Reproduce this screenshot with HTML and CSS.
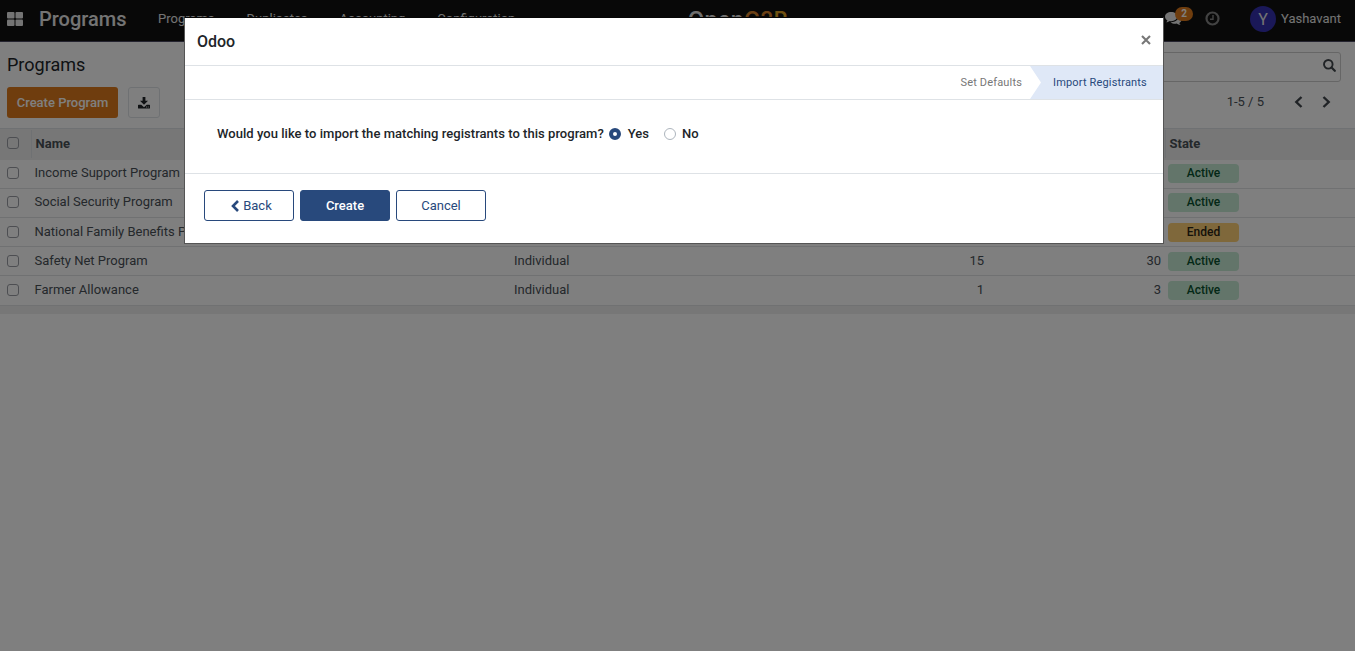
FILE: index.html
```html
<!DOCTYPE html>
<html lang="en">
<head>
<meta charset="utf-8">
<title>Programs</title>
<link rel="stylesheet" href="styles.css">
</head>
<body>
<header class="navbar">
  <svg class="apps" width="16" height="14" viewBox="0 0 16 14"><g fill="#e8e8e8"><rect width="7.5" height="6.5" rx="1"/><rect x="8.5" width="7.5" height="6.5" rx="1"/><rect y="7.5" width="7.5" height="6.5" rx="1"/><rect x="8.5" y="7.5" width="7.5" height="6.5" rx="1"/></g></svg>
  <span class="brand">Programs</span>
  <nav class="menu"><span>Programs</span><span>Duplicates</span><span>Accounting</span><span>Configuration</span></nav>
  <div class="logo">Open<b>G2</b><i>P</i></div>
  <div class="tray">
    <div class="chat">
      <svg width="17" height="14" viewBox="0 0 17 14"><g fill="#e8e8e8"><path d="M6.2 0C2.8 0 0 2.1 0 4.7c0 1.5.9 2.8 2.4 3.7-.2.8-.7 1.300-1.200 1.900 1.500-.1 2.600-.6 3.500-1.300.5.1 1 .2 1.500.2 3.400 0 6.200-2.100 6.200-4.600S9.600 0 6.200 0z"/><path d="M13.400 3.300c.1.400.2.900.2 1.300 0 3.300-3.400 5.700-7.400 5.700h-.6c1.100 1 2.800 1.500 4.600 1.500.5 0 1-.1 1.500-.2 1 .8 2.300 1.400 3.900 1.500-.7-.6-1.100-1.200-1.300-2 1.400-.8 2.300-2 2.300-3.500 0-1.800-1.200-3.400-3.200-4.300z"/></g></svg>
      <span class="count">2</span>
    </div>
    <svg class="clock" width="15" height="15" viewBox="0 0 15 15" fill="none" stroke="#858585"><circle cx="7.500" cy="7.500" r="6" stroke-width="2.200"/><path d="M8 4v4.200H5" stroke-width="1.400"/></svg>
    <span class="avatar">Y</span>
    <span class="user">Yashavant</span>
  </div>
</header>

<section class="panel">
  <div class="panel-left">
    <h1>Programs</h1>
    <div class="actions">
      <button class="create">Create Program</button>
      <button class="export"><svg width="12" height="12" viewBox="0 0 12 12" fill="#212529"><path d="M4.600 0h2.800v3.800H10L6 7.800 2 3.800h2.600z"/><path fill-rule="evenodd" d="M.6 7.700h2.700L6 10.200l2.700-2.500h2.700q.6 0 .6.600v2.600q0 .6-.6.600H.6q-.6 0-.6-.6V8.300q0-.6.600-.6zM8 9.600v.8h.8v-.8zm1.800 0v.8h.8v-.8z"/></svg></button>
    </div>
  </div>
  <div class="panel-right">
    <div class="search"><svg width="13" height="13" viewBox="0 0 13 13" fill="none" stroke="#40464c"><circle cx="5.300" cy="5.300" r="4.300" stroke-width="1.900"/><path d="M8.500 8.500l3.300 3.300" stroke-width="2.200" stroke-linecap="round"/></svg></div>
    <div class="pager">
      <span>1-5 / 5</span>
      <svg width="9" height="12" viewBox="0 0 9 12" fill="none" stroke="#40464c" stroke-width="2.400"><path d="M7.500 1L2.300 6l5.200 5"/></svg>
      <svg width="9" height="12" viewBox="0 0 9 12" fill="none" stroke="#40464c" stroke-width="2.400"><path d="M1.500 1l5.200 5-5.200 5"/></svg>
    </div>
  </div>
</section>

<main class="list">
  <div class="row head"><span class="sel"><i class="box"></i></span><span>Name</span><span></span><span></span><span></span><span class="state">State</span></div>
  <div class="row"><span class="sel"><i class="box"></i></span><span>Income Support Program</span><span></span><span></span><span></span><span class="badge">Active</span></div>
  <div class="row"><span class="sel"><i class="box"></i></span><span>Social Security Program</span><span></span><span></span><span></span><span class="badge">Active</span></div>
  <div class="row"><span class="sel"><i class="box"></i></span><span>National Family Benefits Program</span><span></span><span></span><span></span><span class="badge ended">Ended</span></div>
  <div class="row"><span class="sel"><i class="box"></i></span><span>Safety Net Program</span><span>Individual</span><span class="num">15</span><span class="num">30</span><span class="badge">Active</span></div>
  <div class="row"><span class="sel"><i class="box"></i></span><span>Farmer Allowance</span><span>Individual</span><span class="num">1</span><span class="num">3</span><span class="badge">Active</span></div>
  <div class="foot"></div>
</main>

<div class="backdrop">
  <div class="modal">
    <div class="modal-head"><span>Odoo</span><svg width="10" height="10" viewBox="0 0 10 10" stroke="#777" stroke-width="2.100"><path d="M1 1l8 8M9 1L1 9"/></svg></div>
    <div class="steps"><span class="step">Set Defaults</span><span class="step current">Import Registrants</span></div>
    <div class="question">
      <span class="ask">Would you like to import the matching registrants to this program?</span>
      <i class="radio on"></i><span class="yes">Yes</span>
      <i class="radio"></i><span>No</span>
    </div>
    <div class="buttons">
      <button class="btn back"><svg width="8" height="12" viewBox="0 0 8 12" fill="none" stroke="#28497c" stroke-width="2.600"><path d="M7 1L2 6l5 5"/></svg>Back</button>
      <button class="btn primary">Create</button>
      <button class="btn">Cancel</button>
    </div>
  </div>
</div>
</body>
</html>
```
FILE: styles.css
```css
* { box-sizing: border-box; }
body { margin: 0; height: 651px; overflow: hidden; background: #fff; color: #495057; font: 13px/20px Roboto, sans-serif; }
button { font: inherit; padding: 0; display: flex; align-items: center; justify-content: center; }
svg { display: block; flex: none; }

.navbar { position: relative; display: flex; align-items: center; height: 42px; padding: 0 14px 4px 7px; background: #111; border-bottom: 1px solid #4a4860; color: #e8e8e8; }
.brand { margin-left: 16px; font-size: 20px; font-weight: 500; width: 119px; }
.menu { display: flex; gap: 32px; }
.logo { position: absolute; left: 688px; top: 6px; font: 600 21px/28px Inter, sans-serif; letter-spacing: .4px; color: #ddd; }
.logo b { color: #d9822b; font-weight: 600; }
.logo i { color: #dfa021; font-style: normal; }
.tray { margin-left: auto; display: flex; align-items: center; }
.chat { position: relative; width: 41px; }
.count { position: absolute; left: 10px; top: -5px; width: 18px; height: 14px; border-radius: 7px; background: #df7b1c; color: #fff; font-size: 10px; line-height: 14px; font-weight: 700; text-align: center; }
.clock { margin-left: -1px; }
.avatar { width: 26px; height: 26px; margin: 0 5px 0 30px; border-radius: 50%; background: #3430b0; font-size: 16px; line-height: 27px; text-align: center; }

.panel { display: flex; justify-content: space-between; height: 86px; padding: 9px 14px 0 7px; }
h1 { margin: 0 0 9px; font-size: 18px; line-height: 27px; font-weight: 400; color: #212529; }
.actions { display: flex; gap: 10px; }
.create { width: 111px; height: 31px; border: 0; border-radius: 3px; background: #df7b1c; color: #fff; font-weight: 500; }
.export { width: 32px; height: 31px; border: 1px solid #dee2e6; border-radius: 3px; background: #fff; }
.panel-right { width: 661px; padding-top: 1px; }
.search { display: flex; justify-content: flex-end; align-items: center; height: 30px; padding: 0 4px 3px 0; border: 1px solid #ccc; border-radius: 3px; }
.pager { display: flex; align-items: center; justify-content: flex-end; height: 40px; padding-right: 10px; gap: 19px; }
.pager span { margin-right: 11px; }

.row { display: grid; grid-template-columns: 34.5px 479.5px 292px 178px 177px 194px; align-items: center; height: 29.2px; padding-bottom: 1px; border-bottom: 1px solid #e0e2e4; white-space: nowrap; }
.head { height: 31.6px; padding-bottom: 0; background: #eee; border-top: 1px solid #dee2e6; border-bottom-color: #eee; font-weight: 700; }
.head .sel { border-right: 1px solid #dee2e6; height: 28px; width: 32px; padding-bottom: 2px; }
.head > span:nth-child(2) { padding-left: 1px; }
.head .state { margin-left: 4px; padding-left: 3.500px; border-left: 1px solid #dee2e6; height: 28px; line-height: 28px; }
.sel { display: flex; align-items: center; padding: 0 0 0 7px; }
.box { width: 12px; height: 12px; border: 1px solid #9a9da5; border-radius: 3px; }
.num { text-align: right; }
.badge { width: 71px; height: 19px; margin: 1px 0 0 7px; border-radius: 4px; background: #c6ebd4; color: #08512e; font-size: 12px; line-height: 18px; font-weight: 500; text-align: center; }
.badge.ended { background: #ffd076; color: #2b2514; }
.foot { height: 8px; background: #eee; }

.backdrop { position: absolute; inset: 0; background: rgba(0, 0, 0, .5); }
.modal { width: 980px; height: 227px; margin: 17px 0 0 184px; border: 1px solid #555; border-top-color: #060606; background: #fff; color: #212529; }
.modal-head { display: flex; justify-content: space-between; align-items: center; height: 48px; padding: 1px 12px 0 12px; border-bottom: 1px solid #dee2e6; font-size: 16px; font-weight: 500; }
.modal-head svg { margin-bottom: 5px; }
.steps { display: flex; justify-content: flex-end; height: 34px; border-bottom: 1px solid #dee2e6; font-size: 11px; line-height: 33px; letter-spacing: .16px; }
.step { padding-right: 8px; color: #777; }
.current { width: 133px; padding-left: 23px; background: #dfe8f7; color: #28497c; clip-path: polygon(0 0, 100% 0, 100% 100%, 0 100%, 11px 50%); }
.question { display: flex; align-items: center; height: 74px; padding: 0 0 6px 32px; border-bottom: 1px solid #dee2e6; font-weight: 500; }
.ask { letter-spacing: .035px; }
.radio { width: 12px; height: 12px; margin: 1px 6px 0 5px; border: 1px solid #adb5bd; border-radius: 50%; }
.radio.on { margin-right: 7px; border: 4px solid #28497c; }
.yes { margin-right: 10px; }
.buttons { display: flex; gap: 6px; padding: 16px 0 0 19px; }
.btn { width: 90px; height: 31px; gap: 4px; border: 1px solid #28497c; border-radius: 3px; background: #fff; color: #28497c; }
.back { padding-left: 5px; }
.primary { background: #28497c; color: #fff; font-weight: 500; }
```
